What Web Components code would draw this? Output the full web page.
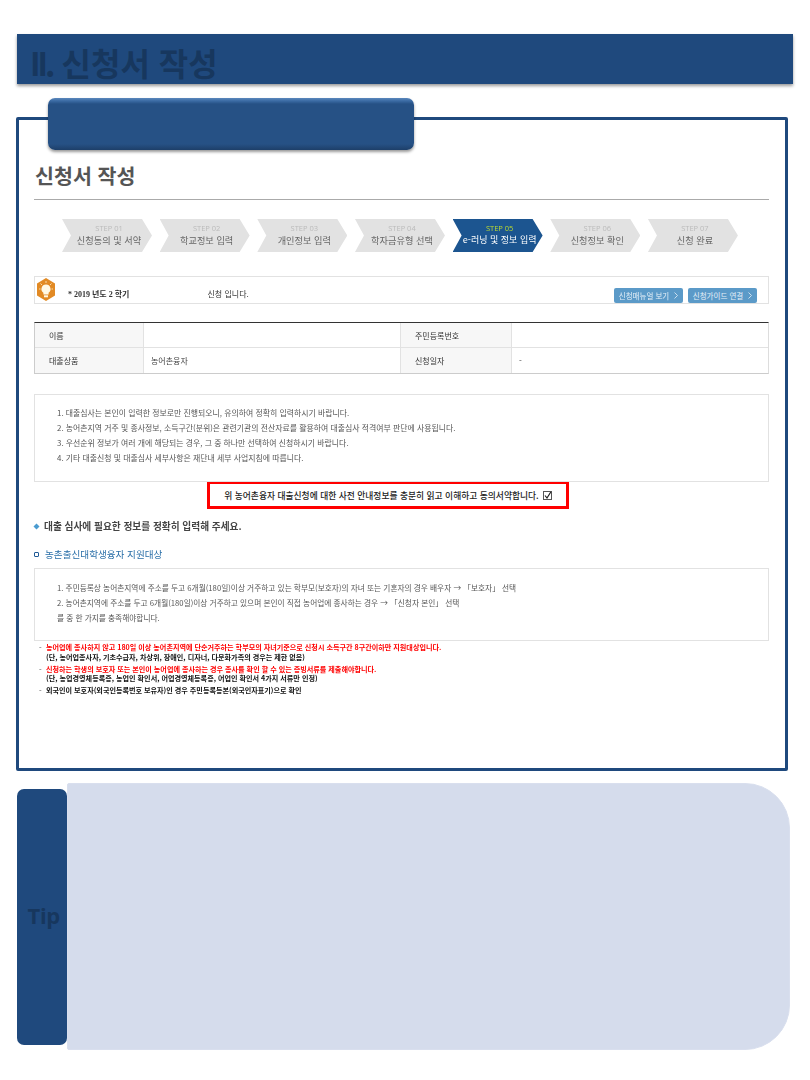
<!DOCTYPE html>
<html lang="ko">
<head>
<meta charset="utf-8">
<title>신청서 작성</title>
<style>
  html, body { margin: 0; padding: 0; background: #fff; }
  body { font-family: "Noto Sans CJK KR", "Noto Sans", sans-serif; width: 810px; height: 1080px; overflow: hidden; }
  .page { display: block; padding: 34px 0 0 16px; }
</style>
</head>
<body>
<div class="page">
  <section-banner><span style="letter-spacing:-3px">II.</span>&nbsp;신청서 작성</section-banner>
  <form-panel>
    <page-title>신청서 작성</page-title>
    <step-bar></step-bar>
    <info-bar></info-bar>
    <applicant-table></applicant-table>
    <notice-box style="height:88px;padding-top:10px;font-size:7.9px">
      <p>1. 대출심사는 본인이 입력한 정보로만 진행되오니, 유의하여 정확히 입력하시기 바랍니다.</p>
      <p>2. 농어촌지역 거주 및 종사정보, 소득구간(분위)은 관련기관의 전산자료를 활용하여 대출심사 적격여부 판단에 사용됩니다.</p>
      <p>3. 우선순위 정보가 여러 개에 해당되는 경우, 그 중 하나만 선택하여 신청하시기 바랍니다.</p>
      <p>4. 기타 대출신청 및 대출심사 세부사항은 재단내 세부 사업지침에 따릅니다.</p>
    </notice-box>
    <agree-box>위 농어촌융자 대출신청에 대한 사전 안내정보를 충분히 읽고 이해하고 동의서약합니다.</agree-box>
    <section-head></section-head>
    <notice-box style="height:73px;padding-top:11px;font-size:7.7px">
      <p>1. 주민등록상 농어촌지역에 주소를 두고 6개월(180일)이상 거주하고 있는 학부모(보호자)의 자녀 또는 기혼자의 경우 배우자 → 「보호자」 선택</p>
      <p>2. 농어촌지역에 주소를 두고 6개월(180일)이상 거주하고 있으며 본인이 직접 농어업에 종사하는 경우 → 「신청자 본인」 선택</p>
      <p>를 중 한 가지를 충족해야합니다.</p>
    </notice-box>
    <remark-list></remark-list>
  </form-panel>
  <tip-panel>Tip</tip-panel>
</div>

<script>
class SectionBanner extends HTMLElement {
  constructor() {
    super();
    this.attachShadow({ mode: "open" }).innerHTML = `
      <style>
        :host {
          display: flex; align-items: center;
          width: 776px; height: 50px; margin-left: 1px; padding: 5px 0 0 13px; box-sizing: border-box;
          background: #1f497d;
          box-shadow: 0 2px 3px rgba(0,0,0,.4);
          color: #17375e;
          font: 700 32px "Noto Sans CJK KR", sans-serif;
          white-space: pre;
        }
      </style>
      <div><slot></slot></div>`;
  }
}

class FormPanel extends HTMLElement {
  constructor() {
    super();
    this.attachShadow({ mode: "open" }).innerHTML = `
      <style>
        :host {
          display: block; position: relative;
          width: 772px; height: 654px; margin-top: 33px; padding: 0 16px 0 15px; box-sizing: border-box;
          border: 3px solid #1f497d;
          border-radius: 2px;
          background: #fff;
        }
        .tab {
          position: absolute; left: 29px; top: -22px;
          width: 366px; height: 52px; box-sizing: border-box;
          border-radius: 7px;
          background: linear-gradient(#5b88bd 0, #3a6aa3 3px, #265185 6px, #265185 46px, #1d3f69 100%);
          box-shadow: 0 2px 3px rgba(0,0,0,.4);
        }
      </style>
      <div class="tab"></div>
      <slot></slot>`;
  }
}

class PageTitle extends HTMLElement {
  constructor() {
    super();
    this.attachShadow({ mode: "open" }).innerHTML = `
      <style>
        :host {
          display: flex; align-items: flex-end;
          height: 80px; padding: 0 0 10px 1px; box-sizing: border-box;
          border-bottom: 1px solid #aaa;
          color: #555;
          font: 700 20.600px/28px "Noto Sans CJK KR", sans-serif;
        }
      </style>
      <slot></slot>`;
  }
}

class StepBar extends HTMLElement {
  constructor() {
    super();
    const steps = ["신청동의 및 서약", "학교정보 입력", "개인정보 입력", "학자금유형 선택", "e-러닝 및 정보 입력", "신청정보 확인", "신청 완료"];
    const items = steps.map((name, i) => `
      <div class="step ${i === 4 ? "on" : ""}">
        <span class="no">STEP 0${i + 1}</span>
        <span class="name">${name}</span>
      </div>`).join("");
    this.attachShadow({ mode: "open" }).innerHTML = `
      <style>
        :host { display: grid; grid-template-columns: repeat(7, 90px); column-gap: 7.67px; margin: 19px 0 24px 28px; filter: blur(.3px); }
        .step {
          height: 33px; padding: 0 0 2px 4px; box-sizing: border-box;
          display: flex; flex-direction: column; align-items: center; justify-content: center;
          background: #e2e2e2; color: #666;
          clip-path: polygon(0 0, 80px 0, 90px 50%, 80px 100%, 0 100%, 9px 50%);
          font-family: "Noto Sans CJK KR", sans-serif;
        }
        .no { font: 7.500px/10px "Open Sans", sans-serif; color: #bbb; }
        .name { font-size: 9.200px; line-height: 14px; white-space: nowrap; }
        .on { background: #1c5590; color: #fff; }
        .on .no { color: #b9d832; }
        .on .name { font-size: 9px; }
      </style>
      ${items}`;
  }
}

class InfoBar extends HTMLElement {
  constructor() {
    super();
    this.attachShadow({ mode: "open" }).innerHTML = `
      <style>
        :host {
          display: flex; align-items: flex-end;
          height: 28px; box-sizing: border-box;
          border: 1px solid #e2e2e2;
          font-family: "Noto Sans CJK KR", sans-serif;
          font-size: 8.500px; color: #333;
          filter: blur(.3px);
        }
        .bulb { width: 18px; height: 23px; margin: 0 13px 2px 2px; flex: none; }
        .term { align-self: center; margin: 6px 78px 0 0; font-family: "Liberation Serif", "Noto Sans CJK KR", serif; font-size: 8px; font-weight: 700; white-space: nowrap; }
        .state { align-self: center; margin: 6px auto 0 0; font-size: 8px; white-space: nowrap; }
        .btn {
          display: flex; align-items: center; justify-content: center; gap: 5px;
          width: 69px; height: 15px; margin: 0 11px 0 0; box-sizing: border-box;
          border-radius: 2px; background: #5b9ac8; color: #e6f0f8;
          font-size: 7.500px; white-space: nowrap;
        }
        .btn + .btn { margin-left: -6px; }
        .btn svg { width: 4px; height: 7px; }
      </style>
      <svg class="bulb" viewBox="0 0 18 23">
        <path d="M9 0 18 5.500V17.500L9 23 0 17.500V5.500Z" fill="#e28a24"/>
        <path d="M9 6.500a4.500 4.500 0 0 0-2.600 8.200V16.500h5.200v-1.800A4.500 4.500 0 0 0 9 6.500Z" fill="#fff8e4"/>
        <rect x="7" y="17.300" width="4" height="2" fill="#fff8e4"/>
        <path d="M9 3v2M3.500 5.500 5 7M14.500 5.500 13 7M2 11h1.500M14.500 11H16" stroke="#fff0c8" stroke-width=".8"/>
      </svg>
      <span class="term">* 2019 년도 2 학기</span>
      <span class="state">신청 입니다.</span>
      <span class="btn">신청매뉴얼 보기 <svg viewBox="0 0 4 7"><path d="M.5.5 3.500 3.500.5 6.500" fill="none" stroke="#e6f0f8" stroke-width=".8"/></svg></span>
      <span class="btn">신청가이드 연결 <svg viewBox="0 0 4 7"><path d="M.5.5 3.500 3.500.5 6.500" fill="none" stroke="#e6f0f8" stroke-width=".8"/></svg></span>`;
  }
}

class ApplicantTable extends HTMLElement {
  constructor() {
    super();
    this.attachShadow({ mode: "open" }).innerHTML = `
      <style>
        :host {
          display: grid; grid-template-columns: 109px 257px 111px 1fr; grid-template-rows: 25px 25px;
          margin: 18px 0 20px;
          border-top: 1px solid #333; border-bottom: 1px solid #ccc; border-left: 1px solid #ccc; border-right: 1px solid #ddd;
          color: #444; font: 8px "Noto Sans CJK KR", sans-serif;
          filter: blur(.3px);
        }
        div { display: flex; align-items: center; padding-left: 14px; box-sizing: border-box; border-right: 1px solid #e2e2e2; }
        div:nth-of-type(-n+4) { border-bottom: 1px solid #e2e2e2; }
        div:nth-of-type(4n) { border-right: 0; }
        .th { background: #f7f7f7; color: #333; }
        .td { padding-left: 7px; }
      </style>
      <div class="th">이름</div><div class="td"></div>
      <div class="th">주민등록번호</div><div class="td"></div>
      <div class="th">대출상품</div><div class="td">농어촌융자</div>
      <div class="th">신청일자</div><div class="td">-</div>`;
  }
}

class NoticeBox extends HTMLElement {
  constructor() {
    super();
    this.attachShadow({ mode: "open" }).innerHTML = `
      <style>
        :host {
          display: block; box-sizing: border-box;
          padding: 13px 0 0 22px;
          border: 1px solid #e2e2e2;
          color: #555; font: 8px/15px "Noto Sans CJK KR", sans-serif;
          filter: blur(.3px);
        }
        ::slotted(p) { margin: 0; white-space: nowrap; }
      </style>
      <slot></slot>`;
  }
}

class AgreeBox extends HTMLElement {
  constructor() {
    super();
    this.attachShadow({ mode: "open" }).innerHTML = `
      <style>
        :host {
          display: flex; align-items: center; justify-content: center; gap: 4px;
          width: 362px; height: 28px; margin: -1px 0 0 173px; box-sizing: border-box;
          border: 3px solid #f00;
          color: #222; font: 500 8.750px "Noto Sans CJK KR", sans-serif; white-space: nowrap;
        }
        svg { width: 9px; height: 9px; flex: none; }
      </style>
      <slot></slot>
      <svg viewBox="0 0 9 9"><rect x=".5" y=".5" width="8" height="8" fill="#fff" stroke="#555"/><path d="M2 4.500 4 7 7.800 1" fill="none" stroke="#222" stroke-width="1.200"/></svg>`;
  }
}

class SectionHead extends HTMLElement {
  constructor() {
    super();
    this.attachShadow({ mode: "open" }).innerHTML = `
      <style>
        :host { display: block; height: 59px; padding-top: 9px; box-sizing: border-box; font-family: "Noto Sans CJK KR", sans-serif; filter: blur(.2px); }
        .lead { display: flex; align-items: center; gap: 5px; height: 16px; color: #444; font-size: 9.700px; font-weight: 700; white-space: nowrap; }
        .lead i { width: 5px; height: 5px; background: #4a9bd0; transform: rotate(45deg) scale(.85); }
        .sub { display: flex; align-items: center; gap: 6px; height: 14px; margin-top: 13px; color: #2a6fa8; font-size: 9.600px; white-space: nowrap; }
        .sub i { width: 3px; height: 3px; border: 1.500px solid #1f5a96; border-radius: 1px; }
      </style>
      <div class="lead"><i></i>대출 심사에 필요한 정보를 정확히 입력해 주세요.</div>
      <div class="sub"><i></i>농촌출신대학생융자 지원대상</div>`;
  }
}

class RemarkList extends HTMLElement {
  constructor() {
    super();
    const rows = [
      [["red", "농어업에 종사하지 않고 180일 이상 농어촌지역에 단순거주하는 학부모의 자녀기준으로 신청시 소득구간 8구간이하만 지원대상입니다."], ["", "(단, 농어업종사자, 기초수급자, 차상위, 장애인, 디자너, 다문화가족의 경우는 제한 없음)"]],
      [["red", "신청하는 학생의 보호자 또는 본인이 농어업에 종사하는 경우 종사를 확인 할 수 있는 증빙서류를 제출해야합니다."], ["", "(단, 농업경영체등록증, 농업인 확인서, 어업경영체등록증, 어업인 확인서 4가지 서류만 인정)"]],
      [["", "외국인이 보호자(외국인등록번호 보유자)인 경우 주민등록등본(외국인자표기)으로 확인"]]
    ];
    const html = rows.map(lines => `<li>${lines.map(([c, t]) => `<span class="${c}">${t}</span>`).join("")}</li>`).join("");
    this.attachShadow({ mode: "open" }).innerHTML = `
      <style>
        :host { display: block; margin: 2px 0 0 5px; filter: blur(.2px); }
        ul { list-style: none; margin: 0; padding: 0; font: 700 7.100px/9.500px "Noto Sans CJK KR", sans-serif; color: #111; }
        li { position: relative; padding-left: 7px; margin-bottom: 2.500px; }
        li::before { content: "-"; position: absolute; left: 0; top: 0; color: #888; }
        span { display: block; white-space: nowrap; }
        .red { color: #f00; }
      </style>
      <ul>${html}</ul>`;
  }
}

class TipPanel extends HTMLElement {
  constructor() {
    super();
    this.attachShadow({ mode: "open" }).innerHTML = `
      <style>
        :host { display: flex; align-items: center; width: 775px; height: 267px; margin: 12px 0 0 1px; }
        .label {
          display: flex; align-items: center; justify-content: flex-end;
          width: 50px; height: 256px; padding: 0 7px 4px 0; box-sizing: border-box;
          border-radius: 7px; background: #1f497d; color: #17375e;
          font: 700 22px "Open Sans", sans-serif; letter-spacing: -.3px;
          flex: none;
        }
        .body {
          width: 723px; height: 267px; flex: none; box-sizing: border-box;
          background: #d5dcec; border: 1px solid #d9dfee;
          border-radius: 2px 45px 45px 2px;
        }
      </style>
      <div class="label"><slot></slot></div>
      <div class="body"></div>`;
  }
}

customElements.define("section-banner", SectionBanner);
customElements.define("form-panel", FormPanel);
customElements.define("page-title", PageTitle);
customElements.define("step-bar", StepBar);
customElements.define("info-bar", InfoBar);
customElements.define("applicant-table", ApplicantTable);
customElements.define("notice-box", NoticeBox);
customElements.define("agree-box", AgreeBox);
customElements.define("section-head", SectionHead);
customElements.define("remark-list", RemarkList);
customElements.define("tip-panel", TipPanel);
</script>
</body>
</html>
